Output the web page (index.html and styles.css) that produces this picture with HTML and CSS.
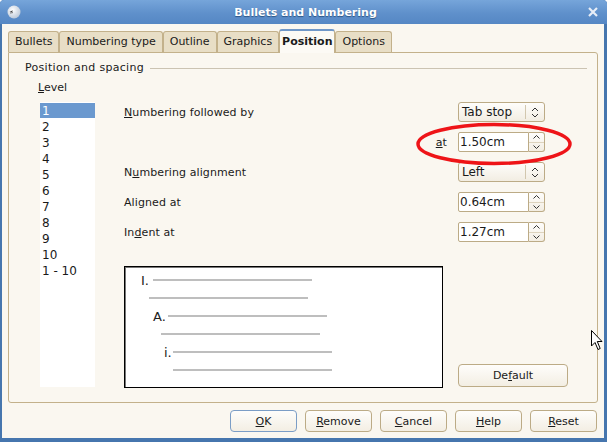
FILE: index.html
```html
<!DOCTYPE html>
<html>
	<head>
		<meta charset="utf-8">
		<title>Bullets and Numbering</title>
		<link rel="stylesheet" href="styles.css">
	</head>
	<body>
		<div class="window">
			<div class="titlebar">
				<svg class="app-icon" width="14" height="14" viewBox="0 0 14 14">
					<defs>
						<radialGradient id="orb" cx="40%" cy="35%" r="70%">
							<stop offset="0" stop-color="#ffffff"/>
							<stop offset="1" stop-color="#b9c6d6"/>
						</radialGradient>
					</defs>
					<circle cx="7" cy="7" r="6.5" fill="url(#orb)"/>
					<path d="M2.5 6.5 L6 5.5 L5 7 Z" fill="#333"/>
					<path d="M3 8 L6 7.6" stroke="#555" stroke-width="0.8"/>
				</svg>
				<span class="title">Bullets and Numbering</span>
				<svg class="close" width="10" height="10" viewBox="0 0 10 10">
					<path d="M1 1 L9 9 M9 1 L1 9" stroke="#e8eef7" stroke-width="2.2"/>
				</svg>
			</div>
			<div class="client">
				<div class="tabs">
					<div class="tab">Bullets</div>
					<div class="tab">Numbering type</div>
					<div class="tab">Outline</div>
					<div class="tab">Graphics</div>
					<div class="tab active">Position</div>
					<div class="tab">Options</div>
				</div>
				<div class="page">
					<div class="legend">
						<span>Position and spacing</span>
						<span class="rule"></span>
					</div>
					<div class="content">
						<div class="level">
							<div class="level-label"><u>L</u>evel</div>
							<ul class="level-list">
								<li class="selected">1</li>
								<li>2</li>
								<li>3</li>
								<li>4</li>
								<li>5</li>
								<li>6</li>
								<li>7</li>
								<li>8</li>
								<li>9</li>
								<li>10</li>
								<li>1 - 10</li>
							</ul>
						</div>
						<div class="settings">
							<div class="fields">
								<div class="label"><u>N</u>umbering followed by</div>
								<div class="combo">
									<span class="combo-text">Tab stop</span>
									<span class="combo-arrows">
										<svg width="8" height="11" viewBox="0 0 8 11"><path d="M1 4 L4 1 L7 4 M1 7 L4 10 L7 7" fill="none" stroke="#333" stroke-width="1"/></svg>
									</span>
								</div>

								<div class="label at"><u>a</u>t</div>
								<div class="spin">
									<span class="spin-entry">1.50cm</span>
									<span class="spin-buttons">
										<span class="spin-up"><svg width="7" height="4" viewBox="0 0 7 4"><path d="M0.5 3.5 L3.5 0.5 L6.5 3.5" fill="none" stroke="#333"/></svg></span>
										<span class="spin-down"><svg width="7" height="4" viewBox="0 0 7 4"><path d="M0.5 0.5 L3.5 3.5 L6.5 0.5" fill="none" stroke="#333"/></svg></span>
									</span>
								</div>

								<div class="label">N<u>u</u>mbering alignment</div>
								<div class="combo">
									<span class="combo-text">Left</span>
									<span class="combo-arrows">
										<svg width="8" height="11" viewBox="0 0 8 11"><path d="M1 4 L4 1 L7 4 M1 7 L4 10 L7 7" fill="none" stroke="#333" stroke-width="1"/></svg>
									</span>
								</div>

								<div class="label">Ali<u>g</u>ned at</div>
								<div class="spin">
									<span class="spin-entry">0.64cm</span>
									<span class="spin-buttons">
										<span class="spin-up"><svg width="7" height="4" viewBox="0 0 7 4"><path d="M0.5 3.5 L3.5 0.5 L6.5 3.5" fill="none" stroke="#333"/></svg></span>
										<span class="spin-down"><svg width="7" height="4" viewBox="0 0 7 4"><path d="M0.5 0.5 L3.5 3.5 L6.5 0.5" fill="none" stroke="#333"/></svg></span>
									</span>
								</div>

								<div class="label">In<u>d</u>ent at</div>
								<div class="spin">
									<span class="spin-entry">1.27cm</span>
									<span class="spin-buttons">
										<span class="spin-up"><svg width="7" height="4" viewBox="0 0 7 4"><path d="M0.5 3.5 L3.5 0.5 L6.5 3.5" fill="none" stroke="#333"/></svg></span>
										<span class="spin-down"><svg width="7" height="4" viewBox="0 0 7 4"><path d="M0.5 0.5 L3.5 3.5 L6.5 0.5" fill="none" stroke="#333"/></svg></span>
									</span>
								</div>
							</div>
							<div class="bottom">
								<div class="preview">
									<svg width="317" height="120" viewBox="0 0 317 120">
										<g stroke="#bebebe" stroke-width="2">
											<line x1="28" y1="13" x2="187" y2="13"/>
											<line x1="24" y1="31" x2="183" y2="31"/>
											<line x1="43" y1="49" x2="202" y2="49"/>
											<line x1="36" y1="67" x2="195" y2="67"/>
											<line x1="48" y1="85" x2="207" y2="85"/>
											<line x1="48" y1="103" x2="207" y2="103"/>
										</g>
										<g class="preview-text">
											<text x="16" y="18">I.</text>
											<text x="28" y="54">A.</text>
											<text x="39" y="90">i.</text>
										</g>
									</svg>
								</div>
								<button class="btn default">De<u>f</u>ault</button>
							</div>
						</div>
					</div>
				</div>
				<div class="actions">
					<button class="btn focused"><u>O</u>K</button>
					<button class="btn"><u>R</u>emove</button>
					<button class="btn"><u>C</u>ancel</button>
					<button class="btn"><u>H</u>elp</button>
					<button class="btn"><u>R</u>eset</button>
				</div>
			</div>

			<!-- red marker drawn over the "at" spin box -->
			<svg class="marker" width="164" height="48" viewBox="0 0 164 48">
				<ellipse cx="80" cy="23" rx="76" ry="19.5" fill="none" stroke="#ee1418" stroke-width="3.5"/>
			</svg>

			<svg class="cursor" width="12" height="21" viewBox="0 0 12 21">
				<path d="M0.5 0.5 L0.5 16 L4 12.5 L7 19.5 L9.2 18.5 L6.3 11.5 L11 11.5 Z" fill="#fff" stroke="#000" stroke-width="1"/>
			</svg>
		</div>
	</body>
</html>
```

FILE: styles.css
```css
* {
	margin: 0;
	padding: 0;
}

body {
	font-family: "DejaVu Sans", "Liberation Sans", sans-serif;
	font-size: 11px;
	color: #1a1a1a;
	background: #fff;
}

.window {
	position: relative;
	display: flex;
	flex-direction: column;
	width: 607px;
	height: 442px;
	box-sizing: border-box;
	padding: 0 3px 4px 2px;
	background: #4676ae;
	border-radius: 4px 4px 0 0;
	overflow: hidden;
}

.titlebar {
	display: flex;
	align-items: center;
	height: 24px;
	margin: 0 -3px 0 -2px;
	padding: 0 9px 0 7px;
	background: linear-gradient(#76a5da, #5f90cb 55%, #5587c4);
	border-radius: 4px 4px 0 0;
}

.app-icon {
	flex: none;
}

.title {
	flex: 1;
	text-align: center;
	color: #fff;
	font-weight: bold;
	font-size: 11px;
	text-shadow: 0 1px 1px #2d5584;
	padding-left: 2px;
}

.close {
	flex: none;
}

.client {
	flex: 1;
	display: flex;
	flex-direction: column;
	background: #faf7f0;
}

.tabs {
	display: flex;
	align-items: flex-end;
	height: 23px;
	margin-top: 5px;
	padding-left: 6px;
}

.tab {
	height: 21px;
	box-sizing: border-box;
	padding: 0 6px;
	line-height: 20px;
	background: #e8dec6;
	border: 1px solid #c3b18b;
	border-bottom: 0;
	border-radius: 3px 3px 0 0;
}

.tab.active {
	position: relative;
	z-index: 1;
	height: 24px;
	margin-bottom: -1px;
	padding: 0 2px;
	line-height: 21px;
	font-weight: bold;
	background: #fcfaf5;
	border-top: 2px solid #6f97c8;
}

.page {
	flex: 1;
	display: flex;
	flex-direction: column;
	margin: 0 6px;
	border: 1px solid #c3b18b;
	border-radius: 0 3px 3px 3px;
	padding: 0 10px 0 16px;
}

.legend {
	display: flex;
	align-items: center;
	margin-top: 8px;
	line-height: 14px;
	letter-spacing: 0.3px;
}

.legend .rule {
	flex: 1;
	height: 1px;
	margin-left: 6px;
	background: #cbc3b2;
}

.content {
	display: flex;
	padding-left: 13px;
	margin-top: 6px;
}

.level {
	width: 57px;
}

.level-label {
	line-height: 14px;
	margin-bottom: 7px;
}

.level-list {
	list-style: none;
	width: 55px;
	height: 285px;
	box-sizing: border-box;
	margin-left: 2px;
	padding-top: 1px;
	background: #fff;
	font-size: 12px;
}

.level-list li {
	height: 16px;
	line-height: 16px;
	padding-left: 2px;
}

.level-list li.selected {
	height: 15px;
	margin-bottom: 1px;
	background: #6b99cf;
	color: #fff;
}

.settings {
	margin-left: 29px;
	margin-top: 21px;
}

.fields {
	display: grid;
	grid-template-columns: 334px 87px;
	grid-auto-rows: 20px;
	row-gap: 10px;
	align-items: center;
}

.label {
	line-height: 20px;
	padding-top: 1px;
	letter-spacing: 0.1px;
}

.label.at {
	text-align: right;
	padding-right: 11px;
}

.combo {
	display: flex;
	height: 20px;
	box-sizing: border-box;
	border: 1px solid #bcab86;
	border-radius: 3px;
	background: linear-gradient(#fefdfb, #f2ede2);
}

.combo-text {
	flex: 1;
	padding-left: 3px;
	line-height: 18px;
	font-size: 12px;
}

.combo-arrows {
	width: 18px;
	margin: 2px 0;
	border-left: 1px solid #d2c7ae;
	display: flex;
	align-items: center;
	justify-content: center;
}

.spin {
	display: flex;
	height: 20px;
}

.spin-entry {
	width: 71px;
	box-sizing: border-box;
	border: 1px solid #bcab86;
	border-radius: 2px 0 0 2px;
	background: #fff;
	line-height: 18px;
	padding-left: 1px;
	font-size: 12px;
}

.spin-buttons {
	width: 16px;
	box-sizing: border-box;
	border: 1px solid #bcab86;
	border-left: 0;
	border-radius: 0 3px 3px 0;
	background: linear-gradient(#fefdfb, #f2ede2);
	display: flex;
	flex-direction: column;
}

.spin-up,
.spin-down {
	flex: 1;
	display: flex;
	justify-content: center;
	align-items: center;
}

.spin-up {
	border-bottom: 1px solid #ddd3bd;
}

.bottom {
	display: flex;
	align-items: flex-end;
	margin-top: 24px;
}

.preview {
	width: 319px;
	height: 122px;
	box-sizing: border-box;
	border: 1px solid #000;
	box-shadow: inset 1px 1px 0 #777;
	background: #fff;
}

.preview svg {
	display: block;
}

.preview-text {
	font-family: "DejaVu Sans", sans-serif;
	font-size: 13px;
	fill: #222;
}

.btn {
	font-family: inherit;
	font-size: 11px;
	color: #1a1a1a;
	width: 67px;
	height: 22px;
	border: 1px solid #bcab86;
	border-radius: 4px;
	background: linear-gradient(#fefdfb, #f3eee3);
}

.btn.default {
	width: 110px;
	height: 23px;
	margin-left: 15px;
	margin-bottom: 1px;
}

.btn.focused {
	border-color: #7b9dc6;
}

.actions {
	display: flex;
	justify-content: flex-end;
	gap: 8px;
	margin-top: 7px;
	padding: 0 7px 6px 0;
}

.marker {
	position: absolute;
	left: 414px;
	top: 121px;
}

.cursor {
	position: absolute;
	left: 591px;
	top: 330px;
}
```
